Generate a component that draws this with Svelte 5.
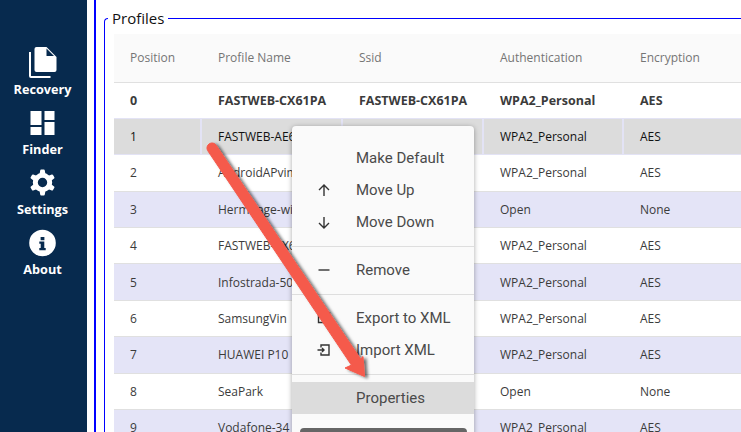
<script>
  const nav = [
    { label: "Recovery", icon: "copy" },
    { label: "Finder", icon: "grid" },
    { label: "Settings", icon: "gear" },
    { label: "About", icon: "info" }
  ];

  const columns = ["Position", "Profile Name", "Ssid", "Authentication", "Encryption"];

  const rows = [
    ["0", "FASTWEB-CX61PA", "FASTWEB-CX61PA", "WPA2_Personal", "AES"],
    ["1", "FASTWEB-AE61PA", "", "WPA2_Personal", "AES"],
    ["2", "AndroidAPvim", "", "WPA2_Personal", "AES"],
    ["3", "Hermitage-wifi", "", "Open", "None"],
    ["4", "FASTWEB-CX61PA", "", "WPA2_Personal", "AES"],
    ["5", "Infostrada-50", "", "WPA2_Personal", "AES"],
    ["6", "SamsungVin", "", "WPA2_Personal", "AES"],
    ["7", "HUAWEI P10", "", "WPA2_Personal", "AES"],
    ["8", "SeaPark", "", "Open", "None"],
    ["9", "Vodafone-34", "", "WPA2_Personal", "AES"]
  ];

  const menu = [
    [{ label: "Make Default" }, { label: "Move Up", icon: "up" }, { label: "Move Down", icon: "down" }],
    [{ label: "Remove", icon: "minus" }],
    [{ label: "Export to XML", icon: "export" }, { label: "Import XML", icon: "import" }],
    [{ label: "Properties", active: true }]
  ];
</script>

<div class="app">
  <nav class="sidebar">
    {#each nav as item}
      <div class="nav-item">
        <svg class="nav-icon" viewBox="0 0 30 32" fill="#fff">
          {#if item.icon === "copy"}
            <path d="M8.500 1H18.500L28.500 11V24a2 2 0 0 1-2 2H8.500a2 2 0 0 1-2-2V3a2 2 0 0 1 2-2z" />
            <path d="M18.500 2.500V10H26z" fill="#072a4e" />
            <path d="M1 6h2v24h19.500v2H3a2 2 0 0 1-2-2z" />
          {:else if item.icon === "grid"}
            <path d="M2.500 5h11v14h-11zM16.500 5h10v9h-10zM2.500 21h11v8h-11zM16.500 16h10v13h-10z" />
          {:else if item.icon === "gear"}
            <circle cx="14.500" cy="16.500" r="7.200" fill="none" stroke="#fff" stroke-width="5" />
            {#each [0, 60, 120, 180, 240, 300] as angle}
              <path d="M11.500 8.500L12.200 4.500a1 1 0 0 1 1-.9h2.600a1 1 0 0 1 1 .9L17.500 8.500z" transform="rotate({angle} 14.500 16.500)" />
            {/each}
          {:else}
            <path fill-rule="evenodd" d="M14.500 3.700a13.300 13.300 0 1 1 0 26.600 13.300 13.300 0 0 1 0-26.600zM12.600 11v3.200h3.800V11zM11.300 15.600v2.200h1.400v4.200h-1.400v2.200h6.400v-2.200h-1.400v-6.400z" />
          {/if}
        </svg>
        <span>{item.label}</span>
      </div>
    {/each}
  </nav>

  <main class="content">
    <fieldset class="profiles">
      <legend>Profiles</legend>
      <table>
        <thead>
          <tr>
            {#each columns as col}
              <th>{col}</th>
            {/each}
          </tr>
        </thead>
        <tbody>
          {#each rows as row, i}
            <tr class:bold={i === 0} class:selected={i === 1} class:odd={i > 1 && i % 2 === 1}>
              {#each row as cell}
                <td>{cell}</td>
              {/each}
            </tr>
          {/each}
        </tbody>
      </table>
    </fieldset>
  </main>

  <div class="menu">
    {#each menu as group, g}
      {#if g > 0}
        <div class="divider"></div>
      {/if}
      {#each group as item}
        <div class="menu-item" class:active={item.active}>
          <span class="menu-icon">
            {#if item.icon}
              <svg viewBox="0 0 16 16" width="16" height="16" fill="none" stroke="#333" stroke-width="1.400">
                {#if item.icon === "up"}
                  <path d="M8 14V3.500M3 8l5-5 5 5" />
                {:else if item.icon === "down"}
                  <path d="M8 3v10.500M3 9l5 5 5-5" />
                {:else if item.icon === "minus"}
                  <path d="M2.500 8h11" />
                {:else if item.icon === "export"}
                  <path d="M7 3.500H2.500v9h9V9M7 8l6-5M10 3h3.500v3.500" />
                {:else}
                  <path d="M5 5.500v-2.500h8v10H5v-2.500M1.500 8H8M6 6l2 2-2 2" />
                {/if}
              </svg>
            {/if}
          </span>
          <span>{item.label}</span>
        </div>
      {/each}
    {/each}
    <div class="menu-bar"></div>
  </div>

  <svg class="arrow" viewBox="0 0 741 432" width="741" height="432">
    <defs>
      <filter id="shade" x="-20%" y="-20%" width="140%" height="140%">
        <feDropShadow dx="3" dy="1.500" stdDeviation="1.800" flood-color="#000" flood-opacity="0.55" />
      </filter>
    </defs>
    <path
      d="M216.200 145.200L360.600 358.900L363 356.500L364.500 376.500L345 368L351.400 365.100L207.800 150.800A5 5 0 0 1 216.200 145.200z"
      fill="#f55a4c"
      stroke="#f55a4c"
      stroke-width="1"
      stroke-linejoin="round"
      filter="url(#shade)"
    />
  </svg>
</div>

<style>
  :global(body) {
    margin: 0;
    overflow: hidden;
    background: #fff;
  }

  .app {
    position: relative;
    display: flex;
    width: 741px;
    height: 432px;
    overflow: hidden;
    font-family: "Open Sans", "Noto Sans", sans-serif;
  }

  .sidebar {
    flex-shrink: 0;
    width: 87px;
    box-sizing: border-box;
    padding: 46px 2px 0 0;
    background: #072a4e;
    color: #fff;
  }

  .nav-item {
    display: flex;
    flex-direction: column;
    align-items: center;
    height: 60px;
    font-size: 12.700px;
    font-weight: 700;
    line-height: 17px;
  }

  .nav-icon {
    width: 30px;
    height: 32px;
    margin-bottom: 3px;
  }

  .content {
    flex: 1;
    min-width: 0;
    margin-left: 7px;
    padding-left: 8px;
    border-left: 2px solid #0000ff;
  }

  .profiles {
    margin: 10px 0 0 0;
    padding: 7px 0 0 9px;
    border: 1px solid #0000ff;
    border-right: 0;
    border-bottom: 0;
    border-top-left-radius: 4px;
    min-width: 0;
  }

  legend {
    margin-left: -6px;
    padding: 0 4px;
    font-size: 15px;
    line-height: 17px;
    color: #111;
  }

  table {
    width: 640px;
    border-collapse: collapse;
    table-layout: fixed;
    font-size: 12px;
    color: #3b3b3b;
  }

  th:nth-child(1), td:nth-child(1) { width: 88px; }
  th:nth-child(2), td:nth-child(2) { width: 141px; }
  th:nth-child(3), td:nth-child(3) { width: 141px; }
  th:nth-child(4), td:nth-child(4) { width: 140px; }

  th {
    height: 48px;
    padding: 0 0 0 16px;
    box-sizing: border-box;
    text-align: left;
    font-weight: 400;
    color: #757575;
    background: #fafafa;
    border-bottom: 1px solid #e0e0e0;
  }

  td {
    height: 36.400px;
    padding: 0 0 0 16px;
    box-sizing: border-box;
    white-space: nowrap;
    border-bottom: 1px solid #e0e0e0;
  }

  tr.bold td {
    font-size: 12.500px;
    font-weight: 700;
    border-bottom-color: #e3e3f5;
  }

  tr.odd td {
    background: #e4e4f7;
  }

  tr.selected td {
    background: #dcdcdc;
    color: #111;
    border-bottom-color: #e3e3f5;
  }

  tr.selected td:not(:last-child) {
    box-shadow: inset -2px 0 0 #e3e3f5;
  }

  .menu {
    position: absolute;
    left: 292px;
    top: 126px;
    width: 182px;
    height: 320px;
    padding: 16px 0 0;
    box-sizing: border-box;
    background: #fafafa;
    border-radius: 4px;
    box-shadow: 0 1px 5px rgba(0, 0, 0, 0.35);
    font-family: Roboto, sans-serif;
    font-size: 15px;
    color: #4a4a4a;
  }

  .menu-item {
    display: flex;
    align-items: center;
    height: 32px;
  }

  .menu-item.active {
    background: #dcdcdc;
  }

  .menu-icon {
    display: flex;
    justify-content: center;
    width: 64px;
  }

  .divider {
    height: 1px;
    margin: 8px 0 7px;
    background: #dedede;
  }

  .menu-bar {
    position: absolute;
    left: 8px;
    right: 7px;
    top: 302px;
    height: 12px;
    background: #666;
    border-radius: 4px;
  }

  .arrow {
    position: absolute;
    left: 0;
    top: 0;
    pointer-events: none;
  }
</style>
